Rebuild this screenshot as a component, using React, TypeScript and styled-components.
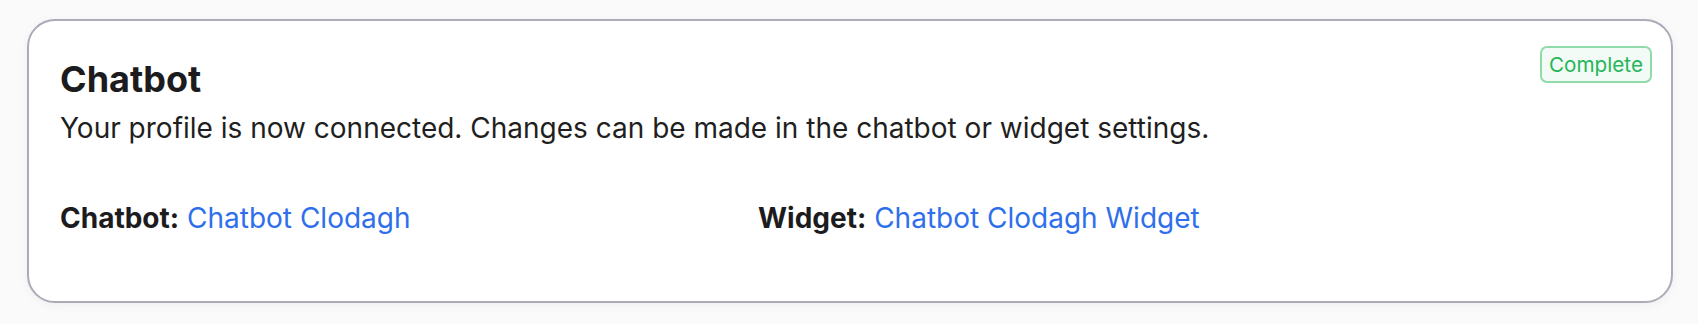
import React from "react";
import styled, { createGlobalStyle } from "styled-components";

const GlobalStyle = createGlobalStyle`
  html, body {
    margin: 0;
    padding: 0;
    background: #fafafa;
    font-family: Inter, "Noto Sans", "Liberation Sans", sans-serif;
    -webkit-font-smoothing: antialiased;
  }
`;

const Page = styled.div`
  padding: 19px 25px 21px 27px;
  box-sizing: border-box;
  width: 1698px;
  height: 324px;
`;

const Card = styled.section`
  position: relative;
  box-sizing: border-box;
  height: 284px;
  background: #ffffff;
  border: 2px solid #acabb8;
  border-radius: 28px;
  box-shadow: 0 2px 10px rgba(0, 0, 0, 0.05);
  padding: 37px 31px 0 31px;
  display: flex;
  flex-direction: column;
`;

const Title = styled.h2`
  margin: 0;
  font-size: 36px;
  line-height: 42px;
  font-weight: 700;
  color: #1c1c1e;
`;

const Description = styled.p`
  margin: 8px 0 0 0;
  font-size: 28px;
  line-height: 40px;
  color: #1f1f22;
`;

const Details = styled.div`
  margin-top: 50px;
  display: grid;
  grid-template-columns: 698px 1fr;
`;

const Detail = styled.div`
  font-size: 28px;
  line-height: 40px;
  color: #1c1c1e;
`;

const Label = styled.span`
  font-weight: 700;
`;

const Link = styled.a`
  color: #2f6fec;
  text-decoration: none;
`;

const Badge = styled.span`
  position: absolute;
  top: 25px;
  right: 19px;
  box-sizing: border-box;
  height: 37px;
  padding: 0 7px;
  display: inline-flex;
  align-items: center;
  font-size: 20.7px;
  color: #27b659;
  background: #f2fbf5;
  border: 2px solid #8fdcaa;
  border-radius: 7px;
`;

export default function App() {
  return (
    <>
      <GlobalStyle />
      <Page>
        <Card>
          <Badge>Complete</Badge>
          <Title>Chatbot</Title>
          <Description>
            Your profile is now connected. Changes can be made in the chatbot or widget settings.
          </Description>
          <Details>
            <Detail>
              <Label>Chatbot:</Label> <Link href="#">Chatbot Clodagh</Link>
            </Detail>
            <Detail>
              <Label>Widget:</Label> <Link href="#">Chatbot Clodagh Widget</Link>
            </Detail>
          </Details>
        </Card>
      </Page>
    </>
  );
}
